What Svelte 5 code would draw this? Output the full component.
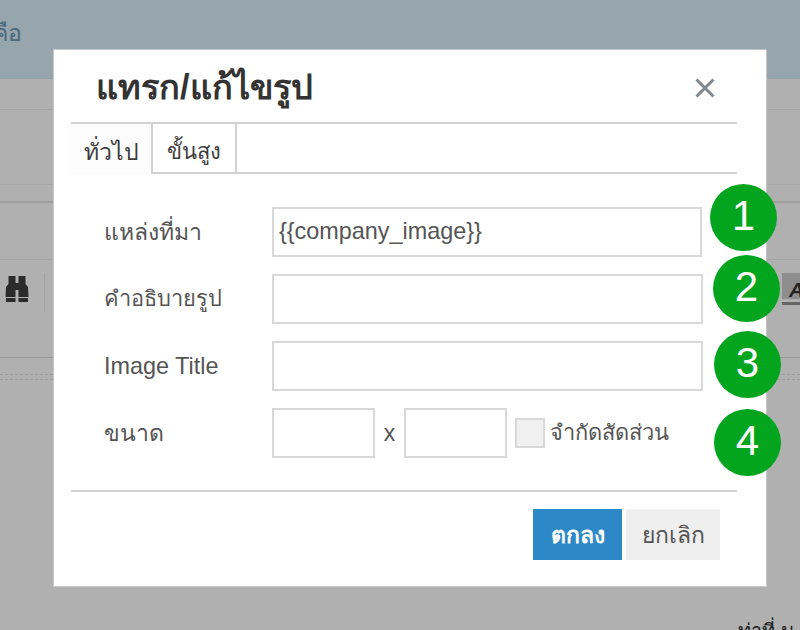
<script>
  const fields = [
    { label: 'แหล่งที่มา', value: '{{company_image}}', cls: 'a' },
    { label: 'คำอธิบายรูป', value: '', cls: 'b' },
    { label: 'Image Title', value: '', cls: 'c' }
  ];
  const badges = [
    { n: 1, cls: 'b1' },
    { n: 2, cls: 'b2' },
    { n: 3, cls: 'b3' },
    { n: 4, cls: 'b4' }
  ];
</script>

<div class="page">
  <header class="top"><span class="toptext">คือ</span></header>
  <div class="band one"></div>
  <div class="band two"></div>
  <div class="band three"></div>
  <div class="toolbar">
    <svg class="bino" viewBox="0 0 24 27" width="24" height="27" aria-hidden="true">
      <path fill="#2b2b2b" d="M3.500 0h7v7h3V0h7v8l2.500 3 .5 10h-10V14h-3v7H.5l.5-10 2.500-3z"/>
      <path fill="#2b2b2b" d="M1 22h9.500v4H1zM13.500 22h9.500v4h-9.500z"/>
    </svg>
    <span class="sep"></span>
    <span class="spacer"></span>
    <div class="acc"><span class="letter">A</span></div>
  </div>
  <div class="dash"></div>
  <div class="rest"><span class="resttext">ท่าที่ ม</span></div>
</div>

<div class="modal">
  <div class="head">
    <h1>แทรก/แก้ไขรูป</h1>
    <svg class="close" viewBox="0 0 22 22" width="22" height="22" aria-hidden="true">
      <path d="M2.500 2.500l17 17M19.500 2.500l-17 17" stroke="#7f8790" stroke-width="3" fill="none"/>
    </svg>
  </div>
  <div class="tabs">
    <div class="tab active">ทั่วไป</div>
    <div class="tab">ขั้นสูง</div>
  </div>
  <div class="form">
    {#each fields as f}
      <div class="row {f.cls}">
        <span class="label">{f.label}</span>
        <div class="input">{f.value}</div>
      </div>
    {/each}
    <div class="row d">
      <span class="label">ขนาด</span>
      <div class="input small"></div>
      <span class="x">x</span>
      <div class="input small"></div>
      <span class="check"></span>
      <span class="ratio">จำกัดสัดส่วน</span>
    </div>
  </div>
  <div class="foot">
    <div class="btn ok">ตกลง</div>
    <div class="btn cancel">ยกเลิก</div>
  </div>
</div>

{#each badges as b}
  <div class="badge {b.cls}">{b.n}</div>
{/each}

<style>
  :global(body) {
    margin: 0;
    background: #b0b0b0;
    font-family: "Liberation Sans", "Noto Sans", "DejaVu Sans", sans-serif;
  }
  .page {
    width: 800px;
    height: 630px;
    overflow: hidden;
    position: relative;
    display: flex;
    flex-direction: column;
    background: #b0b0b0;
  }
  .top {
    height: 79px;
    flex: none;
    box-sizing: border-box;
    background: #97a5ac;
    border-bottom: 1px solid #8fa3ab;
  }
  .toptext {
    display: block;
    margin: 19px 0 0 -7px;
    font-size: 23px;
    line-height: 28px;
    color: #48697c;
  }
  .band { flex: none; box-sizing: border-box; border-bottom: 1px solid #a6a6a6; }
  .one { height: 31px; }
  .two { height: 75px; }
  .three { height: 18px; border-bottom: 2px solid #9e9e9e; }
  .toolbar {
    height: 155px;
    flex: none;
    box-sizing: border-box;
    display: flex;
    border-bottom: 1px solid #999;
    background: linear-gradient(#b0b0b0 0 56px, #a6a6a6 56px 57px, #b0b0b0 57px);
    padding: 73px 0 0 5px;
    align-items: flex-start;
  }
  .bino { flex: none; margin-top: 0; }
  .sep { width: 1px; height: 39px; margin: -3px 0 0 15px; background: #a2a2a2; }
  .spacer { flex: 1; }
  .acc {
    width: 18px;
    height: 32px;
    box-sizing: border-box;
    margin-top: -3px;
    background: linear-gradient(#8e8e8e 0 26px, transparent 26px 29px, #666 29px);
    overflow: hidden;
    flex: none;
  }
  .letter {
    display: block;
    margin: 5px 0 0 7px;
    font: italic bold 21px/24px "Liberation Sans", sans-serif;
    color: #222;
  }
  .dash {
    flex: none;
    height: 4px;
    margin-top: 16px;
    border-top: 1px dashed #9c9c9c;
    border-bottom: 1px dashed #9c9c9c;
  }
  .rest { flex: 1; display: flex; justify-content: flex-end; align-items: flex-end; }
  .resttext {
    margin: 0 0 -14px 0;
    width: 62px;
    font-size: 20px;
    line-height: 26px;
    white-space: nowrap;
    color: #1e1e1e;
  }

  .modal {
    position: absolute;
    left: 53px;
    top: 49px;
    width: 714px;
    height: 538px;
    box-sizing: border-box;
    background: #fff;
    border: 1px solid #c8c8c8;
    padding: 0 29px 0 17px;
    display: flex;
    flex-direction: column;
    color: #444;
  }
  .head {
    height: 74px;
    flex: none;
    box-sizing: border-box;
    border-bottom: 2px solid #d2d2d2;
    display: flex;
    align-items: center;
    justify-content: space-between;
    padding: 0 21px 0 25px;
  }
  h1 {
    margin: 2px 0 0;
    font-size: 34.300px;
    line-height: 44px;
    font-weight: bold;
    color: #333;
    white-space: nowrap;
  }
  .close { margin-top: 4px; }
  .tabs {
    flex: none;
    height: 50px;
    box-sizing: border-box;
    display: flex;
    border-bottom: 2px solid #d2d2d2;
  }
  .tab {
    box-sizing: border-box;
    width: 84px;
    height: 48px;
    padding-top: 6px;
    border-right: 2px solid #d2d2d2;
    display: flex;
    align-items: center;
    justify-content: center;
    font-size: 22px;
    color: #3c3c3c;
  }
  .tab.active {
    width: 82px;
    height: 50px;
    padding-top: 5px;
    font-size: 23px;
    background: #fcfcfc;
  }
  .form {
    flex: none;
    height: 318px;
    box-sizing: border-box;
    padding-top: 33px;
    border-bottom: 2px solid #d2d2d2;
    display: flex;
    flex-direction: column;
    gap: 17px;
  }
  .row {
    display: flex;
    align-items: center;
    height: 50px;
    flex: none;
  }
  .label {
    width: 201px;
    padding-left: 33px;
    box-sizing: border-box;
    flex: none;
    font-size: 23px;
    line-height: 30px;
    color: #555;
    white-space: nowrap;
  }
  .row.b .label { font-size: 21.800px; }
  .row.c .label { font-size: 23.400px; }
  .input {
    box-sizing: border-box;
    height: 50px;
    width: 431px;
    border: 2px solid #d8d8d8;
    font-size: 23.400px;
    line-height: 44px;
    padding-left: 5px;
    color: #555;
    white-space: nowrap;
  }
  .row.a .input { width: 430px; }
  .input.small { width: 103px; }
  .x { width: 29px; text-align: center; font-size: 23px; line-height: 28px; color: #555; }
  .check {
    margin-left: 8px;
    width: 30px;
    height: 30px;
    box-sizing: border-box;
    background: #f0f0f0;
    border: 2px solid #d8d8d8;
    flex: none;
  }
  .ratio {
    margin-left: 5px;
    font-size: 21.800px;
    line-height: 30px;
    color: #555;
    white-space: nowrap;
  }
  .foot {
    flex: 1;
    display: flex;
    align-items: flex-start;
    justify-content: flex-end;
    gap: 4px;
    padding: 17px 17px 0 0;
  }
  .btn {
    height: 51px;
    display: flex;
    align-items: center;
    justify-content: center;
    font-size: 23px;
    box-sizing: border-box;
  }
  .ok { width: 89px; background: #2d88c7; color: #fff; font-weight: bold; }
  .cancel { width: 94px; background: #efefef; color: #555; }

  .badge {
    position: absolute;
    width: 67px;
    height: 67px;
    border-radius: 50%;
    background: #03a51f;
    color: #fff;
    font-size: 42px;
    line-height: 63px;
    text-align: center;
  }
  .b1 { left: 710px; top: 184px; }
  .b2 { left: 713px; top: 255px; }
  .b3 { left: 714px; top: 331px; }
  .b4 { left: 714px; top: 409px; }
</style>
